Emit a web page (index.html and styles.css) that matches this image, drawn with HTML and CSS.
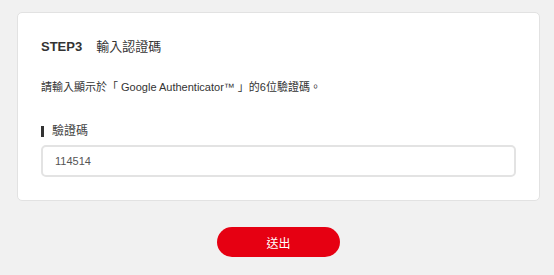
FILE: index.html
```html
<!DOCTYPE html>
<html lang="zh-Hant">
<head>
<meta charset="utf-8">
<link rel="stylesheet" href="styles.css">
</head>
<body>
<div class="page">
  <section class="card">
    <h2 class="title"><span class="step">STEP3</span><span class="title-text">輸入認證碼</span></h2>
    <p class="desc">請輸入顯示於「 Google Authenticator™ 」的6位驗證碼。</p>
    <label class="label" for="code">驗證碼</label>
    <input class="input" id="code" type="text" value="114514">
  </section>
  <div class="actions">
    <button class="submit" type="button">送出</button>
  </div>
</div>
</body>
</html>
```

FILE: styles.css
```css
* { box-sizing: border-box; }
html, body {
  margin: 0;
  padding: 0;
  background: #f1f1f1;
  font-family: "Liberation Sans", Arial, "Noto Sans CJK TC", sans-serif;
  color: #333;
}
.page {
  padding: 12px 14px 0 17px;
}
.card {
  background: #fff;
  border: 1px solid #e2e2e2;
  border-radius: 5px;
  padding: 24px 23px 23px 23px;
  display: flex;
  flex-direction: column;
}
.title {
  margin: 0;
  font-size: 13px;
  line-height: 20px;
  font-weight: normal;
  color: #333;
}
.step {
  font-weight: bold;
  margin-right: 14px;
}
.title-text {
  font-weight: normal;
}
.desc {
  margin: 20px 0 0 0;
  font-size: 11px;
  line-height: 20px;
  color: #333;
}
.label {
  margin-top: 25px;
  font-size: 12px;
  line-height: 18px;
  color: #444;
  display: flex;
  align-items: center;
}
.label::before {
  content: "";
  display: block;
  width: 3px;
  height: 11px;
  background: #333;
  margin-right: 8px;
}
.input {
  margin-top: 5px;
  height: 32px;
  width: 100%;
  border: 2px solid #e3e3e3;
  border-radius: 5px;
  padding: 0 12px;
  font-family: "Liberation Sans", Arial, sans-serif;
  font-size: 11px;
  color: #555;
  background: #fff;
  outline: none;
}
.actions {
  display: flex;
  justify-content: center;
  margin-top: 26px;
}
.submit {
  width: 123px;
  height: 30px;
  border: none;
  border-radius: 15px;
  background: #e60012;
  color: #fff;
  font-family: "Liberation Sans", Arial, "Noto Sans CJK TC", sans-serif;
  font-size: 12px;
  cursor: pointer;
}
```
